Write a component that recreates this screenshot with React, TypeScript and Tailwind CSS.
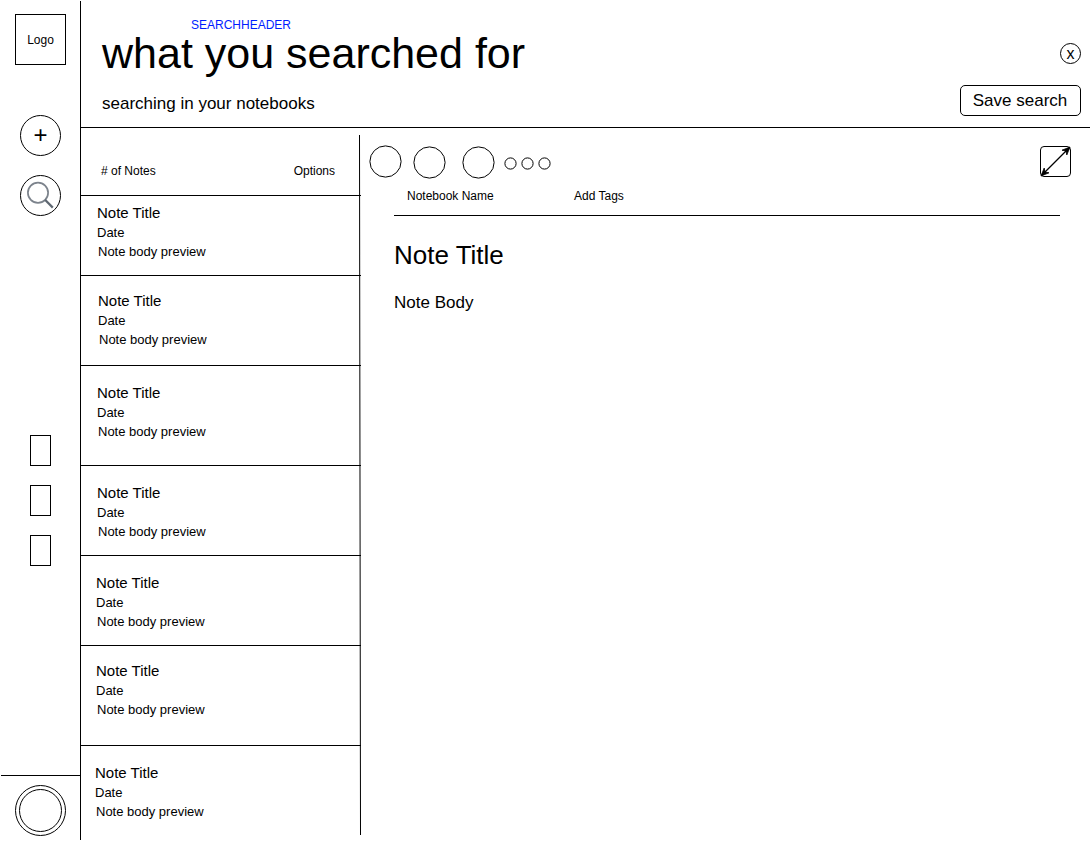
const notes = [
  { row: 'h-20 pt-[7px] pl-4', id: 1 },
  { row: 'h-[90px] pt-[15px] pl-[17px]', id: 2 },
  { row: 'h-[100px] pt-[17px] pl-4', id: 3 },
  { row: 'h-[90px] pt-[17px] pl-4', id: 4 },
  { row: 'h-[90px] pt-[17px] pl-[15px]', id: 5 },
  { row: 'h-[100px] pt-[15px] pl-[15px]', id: 6 },
];

function NoteRow({ className }: { className: string }) {
  return (
    <li className={className}>
      <div className="h-5 text-[15px] leading-5">Note Title</div>
      <div className="h-[19px] text-[13px] leading-[19px]">Date</div>
      <div className="ml-px h-5 text-[13px] leading-5">Note body preview</div>
    </li>
  );
}

function SearchIcon() {
  return (
    <svg width="39" height="39" viewBox="0 0 39 39" fill="none">
      <circle cx="17" cy="16.8" r="10.1" stroke="#7c838c" strokeWidth="1.7" />
      <path d="M24 23.8L31.8 31.6" stroke="#5f6872" strokeWidth="2.2" />
    </svg>
  );
}

function ExpandIcon() {
  return (
    <svg className="shrink-0" width="31" height="31" viewBox="0 0 31 31">
      <path d="M2 29L29 2" stroke="#000" strokeWidth="1.2" />
      <path d="M30 1L22 4.2L26 5L26.8 9ZM1 30L9 26.8L5 26L4.2 22Z" fill="#000" stroke="#000" strokeWidth="0.8" />
    </svg>
  );
}

function Circle({ size, r }: { size: number; r: number }) {
  return (
    <svg width={size} height={size} fill="none">
      <circle cx={size / 2} cy={size / 2} r={r} stroke="#000" />
    </svg>
  );
}

function Sidebar() {
  return (
    <aside className="flex w-20 flex-col items-center">
      <div className="mt-[14px] ml-px flex h-[51px] w-[51px] items-center justify-center border border-black text-xs">
        Logo
      </div>
      <button className="mt-[50px] ml-px flex h-[41px] w-[41px] items-center justify-center rounded-full border border-black pb-[2px] text-2xl leading-6">
        +
      </button>
      <button className="mt-[19px] ml-px flex h-[41px] w-[41px] items-center justify-center rounded-full border border-black">
        <SearchIcon />
      </button>
      <nav className="mt-[219px] ml-px flex flex-col gap-[19px]">
        <div className="h-[31px] w-[21px] border border-black" />
        <div className="h-[31px] w-[21px] border border-black" />
        <div className="h-[31px] w-[21px] border border-black" />
      </nav>
      <div className="mt-[209px] h-px w-[79px] self-end bg-black" />
      <div className="mt-[9px] ml-px flex h-[51px] w-[51px] items-center justify-center rounded-full border border-black">
        <div className="h-[43px] w-[43px] rounded-full border border-black" />
      </div>
    </aside>
  );
}

function SearchHeader() {
  return (
    <header className="mr-[2px] flex h-32 justify-between border-b border-black">
      <div className="pl-[21px]">
        <div className="mt-[17px] ml-[89px] h-4 text-xs leading-4 text-[#001dff]">SEARCHHEADER</div>
        <h1 className="h-10 text-[43px] leading-10">what you searched for</h1>
        <p className="mt-[21px] h-5 text-[17px] leading-5">searching in your notebooks</p>
      </div>
      <div className="mr-[9px] flex flex-col items-end pt-[43px]">
        <button className="flex h-[21px] w-[21px] items-center justify-center rounded-full border border-black text-base leading-4">
          x
        </button>
        <button className="mt-[21px] h-[31px] w-[121px] rounded-[5px] border border-black pr-px text-[17px] leading-[29px]">
          Save search
        </button>
      </div>
    </header>
  );
}

function NotesList() {
  return (
    <section className="w-[280px]">
      <div className="flex h-[68px] justify-between border-b border-black pt-[35px] pr-[26px] pl-5 text-xs leading-4">
        <span>#&nbsp;of Notes</span>
        <span>Options</span>
      </div>
      <ul>
        {notes.map((n) => (
          <NoteRow key={n.id} className={`border-b border-black ${n.row}`} />
        ))}
        <NoteRow className="pt-[17px] pl-[14px]" />
      </ul>
    </section>
  );
}

function NoteView() {
  return (
    <article className="flex-1">
      <div className="flex items-start pt-[17px] pl-2">
        <Circle size={33} r={15.6} />
        <div className="mt-px ml-[11px]">
          <Circle size={33} r={15.6} />
        </div>
        <div className="mt-px ml-4">
          <Circle size={33} r={15.6} />
        </div>
        <div className="mt-3 ml-[9px] flex gap-1">
          <Circle size={13} r={5.6} />
          <Circle size={13} r={5.6} />
          <Circle size={13} r={5.6} />
        </div>
        <button className="mt-px mr-[21px] ml-auto flex h-[31px] w-[31px] items-center justify-center rounded-[4px] border border-black">
          <ExpandIcon />
        </button>
      </div>
      <div className="mr-[32px] ml-[33px] flex h-[37px] border-b border-black pt-[9px] pl-[13px] text-xs leading-4">
        <span className="w-[167px]">Notebook Name</span>
        <span>Add Tags</span>
      </div>
      <h2 className="mt-[23px] pl-[33px] text-[26px] leading-8">Note Title</h2>
      <p className="mt-[22px] pl-[33px] text-[17px] leading-5">Note Body</p>
    </article>
  );
}

export default function App() {
  return (
    <div className="flex h-[842px] w-[1092px] overflow-hidden bg-white font-['Liberation_Sans',Arial,sans-serif] text-black">
      <Sidebar />
      <div className="mt-px h-[839px] w-px bg-black" />
      <main className="flex flex-1 flex-col">
        <SearchHeader />
        <div className="flex flex-1">
          <NotesList />
          <svg className="mt-[7px] -ml-[2px] shrink-0" width="2" height="700" viewBox="0 0 2 700">
            <path d="M0.5 0L1.5 700" stroke="#000" />
          </svg>
          <NoteView />
        </div>
      </main>
    </div>
  );
}
